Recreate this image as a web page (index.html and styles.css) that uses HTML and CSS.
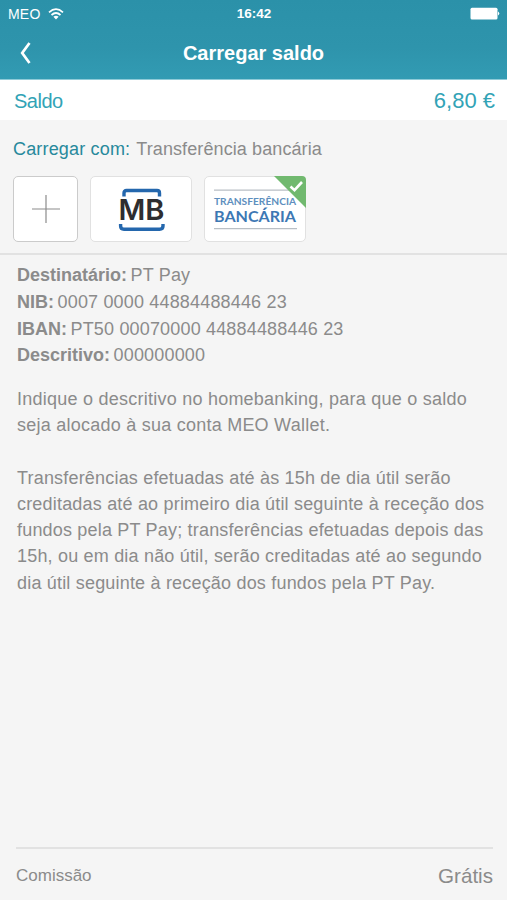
FILE: index.html
```
<!DOCTYPE html>
<html lang="pt">
<head>
    <meta charset="UTF-8">
    <meta name="viewport" content="width=device-width, initial-scale=1.0">
    <title>Carregar saldo</title>
    <link rel="stylesheet" href="styles.css">
</head>
<body>
    <header class="header">
        <!-- Phone status bar -->
        <div class="status-bar">
            <div class="carrier">
                <span>MEO</span>
                <svg class="wifi" width="16" height="12" viewBox="0 0 16 12">
                    <path d="M1 4.4 Q8 -2 15 4.4 M3.5 7 Q8 3 12.5 7" fill="none" stroke="#fff" stroke-width="1.7"/>
                    <path d="M5.4 8.8 Q8 6.6 10.6 8.8 L8 11.5 Z" fill="#fff"/>
                </svg>
            </div>
            <span class="time">16:42</span>
            <svg class="battery" width="30" height="13" viewBox="0 0 30 13">
                <rect x="0.5" y="0.8" width="27" height="11.7" rx="1.5" fill="#fff"/>
                <path d="M28 4.5 Q30.5 6.5 28 8.5 Z" fill="#fff"/>
            </svg>
        </div>
        <!-- Title bar -->
        <div class="nav-bar">
            <svg class="back" width="12" height="22" viewBox="0 0 12 22">
                <path d="M9.5 1 L2.2 11 L9.5 21" fill="none" stroke="#fff" stroke-width="2.7"/>
            </svg>
            <h1 class="title">Carregar saldo</h1>
        </div>
    </header>

    <div class="balance">
        <span class="balance-label">Saldo</span>
        <span class="balance-value">6,80 €</span>
    </div>

    <!-- Payment methods -->
    <section class="methods">
        <p class="methods-title"><span class="methods-label">Carregar com:</span> <span class="methods-name">Transferência bancária</span></p>
        <div class="method-list">
            <div class="method add">
                <svg width="28" height="28" viewBox="0 0 28 28">
                    <path d="M14 0 V28 M0 14 H28" stroke="#8c8c8c" stroke-width="1.2"/>
                </svg>
            </div>
            <div class="method">
                <svg width="48" height="46" viewBox="0 0 48 46">
                    <path d="M7 10.5 V7 Q7 4.5 9.5 4.5 H40 Q42.5 4.5 42.5 7 V10.5" fill="none" stroke="#2467ad" stroke-width="3.4"/>
                    <path d="M3.6 38 V40 Q3.6 43.2 7 43.2 H42.5 Q46 43.2 46 40 V38" fill="none" stroke="#2467ad" stroke-width="3.4"/>
                    <text class="mb-text" x="1.5" y="34.4" textLength="46" lengthAdjust="spacingAndGlyphs">MB</text>
                </svg>
            </div>
            <div class="method transfer">
                <svg width="84" height="42" viewBox="0 0 84 42">
                    <path d="M1 2.2 H84 M1 40.7 H84" stroke="#b9bfc5" stroke-width="1.2"/>
                    <text class="transfer-small" x="1" y="16.5" textLength="82" lengthAdjust="spacingAndGlyphs">TRANSFERÊNCIA</text>
                    <text class="transfer-big" x="1" y="34" textLength="82" lengthAdjust="spacingAndGlyphs">BANCÁRIA</text>
                </svg>
                <svg class="selected" width="32" height="32" viewBox="0 0 32 32">
                    <path d="M0 0 H28 Q32 0 32 4 V32 Z" fill="#71b96f"/>
                    <path d="M16.5 10.5 L20.5 14.2 L28 6" fill="none" stroke="#fff" stroke-width="2.6"/>
                </svg>
            </div>
        </div>
    </section>

    <!-- Transfer details -->
    <main class="details">
        <ul class="account">
            <li><b>Destinatário:</b> <span>PT Pay</span></li>
            <li><b>NIB:</b> <span>0007 0000 44884488446 23</span></li>
            <li><b>IBAN:</b> <span>PT50 00070000 44884488446 23</span></li>
            <li><b>Descritivo:</b> <span>000000000</span></li>
        </ul>
        <p class="text intro">Indique o descritivo no homebanking, para que o saldo<br>seja alocado à sua conta MEO Wallet.</p>
        <p class="text">Transferências efetuadas até às 15h de dia útil serão<br>creditadas até ao primeiro dia útil seguinte à receção dos<br>fundos pela PT Pay; transferências efetuadas depois das<br>15h, ou em dia não útil, serão creditadas até ao segundo<br>dia útil seguinte à receção dos fundos pela PT Pay.</p>
    </main>

    <footer class="fee">
        <span class="fee-label">Comissão</span>
        <span class="fee-value">Grátis</span>
    </footer>
</body>
</html>
```
FILE: styles.css
```
* {
    box-sizing: border-box;
}
body {
    display: flex;
    flex-direction: column;
    height: 100vh;
    margin: 0;
    background-color: #f5f5f5;
    color: #8b8b8b;
    font-family: "Liberation Sans", Arial, sans-serif;
    overflow: hidden;
}
svg {
    display: block;
    flex: none;
}
h1, p, ul {
    margin: 0;
    padding: 0;
}
.header {
    height: 80px;
    background: linear-gradient(#2b91a9, #2e94ac 60%, #329bb3);
    border-bottom: 1px solid #8fcbd8;
    color: #fff;
}
/* Status bar */
.status-bar {
    display: grid;
    grid-template-columns: 1fr auto 1fr;
    align-items: center;
    height: 27px;
    padding: 0 7px 0 8px;
    font-size: 14px;
}
.carrier {
    display: flex;
    align-items: center;
    gap: 7px;
    letter-spacing: 0.2px;
}
.time {
    font-size: 13.5px;
    font-weight: bold;
}
.battery {
    justify-self: end;
}
/* Title bar */
.nav-bar {
    display: grid;
    grid-template-columns: 40px 1fr 40px;
    align-items: center;
    height: 52px;
}
.back {
    margin-left: 20px;
}
.title {
    font-size: 20px;
    text-align: center;
}
.balance {
    display: flex;
    justify-content: space-between;
    align-items: center;
    height: 40px;
    padding: 2px 12px 0 14px;
    background-color: #fff;
    color: #32a3b6;
}
.balance-label {
    font-size: 20px;
    letter-spacing: -0.5px;
}
.balance-value {
    font-size: 22px;
}
/* Payment methods */
.methods {
    height: 135px;
    padding: 17px 13px 0;
    border-bottom: 2px solid #e2e2e2;
}
.methods-title {
    font-size: 18px;
    line-height: 24px;
}
.methods-label {
    color: #27899c;
    letter-spacing: 0.17px;
}
.methods-name {
    margin-left: 1px;
    letter-spacing: 0.1px;
}
.method-list {
    display: flex;
    gap: 12px;
    margin-top: 15px;
}
.method {
    position: relative;
    display: flex;
    justify-content: center;
    align-items: center;
    width: 102px;
    height: 66px;
    background-color: #fff;
    border: 1px solid #e1e1e1;
    border-radius: 5px;
}
.add {
    width: 65px;
    border: 1px solid #cbcbcb;
}
.mb-text {
    font-family: "Inter", sans-serif;
    font-size: 29px;
    font-weight: 600;
    fill: #2e2e30;
}
.transfer-small {
    font-family: "Lato", sans-serif;
    font-size: 9.2px;
    font-weight: 700;
    fill: #5e8fbe;
}
.transfer-big {
    font-family: "Lato", sans-serif;
    font-size: 15px;
    font-weight: 700;
    fill: #3d78b4;
}
.selected {
    position: absolute;
    top: -1px;
    right: -1px;
}
/* Transfer details */
.details {
    flex: 1;
    padding: 7px 0 0 17px;
    font-size: 18px;
    white-space: nowrap;
}
.account {
    margin-bottom: 17px;
    list-style: none;
    line-height: 26.8px;
}
.account span {
    margin-left: -1.5px;
    letter-spacing: 0.17px;
}
.text {
    margin-bottom: 26.2px;
    line-height: 26.2px;
    letter-spacing: 0.19px;
}
.intro {
    letter-spacing: 0.24px;
}
.fee {
    display: flex;
    justify-content: space-between;
    align-items: center;
    height: 53px;
    margin: 0 14px 0 16px;
    padding-top: 2px;
    border-top: 2px solid #e2e2e2;
}
.fee-label {
    font-size: 17px;
}
.fee-value {
    font-size: 20.6px;
}
```
